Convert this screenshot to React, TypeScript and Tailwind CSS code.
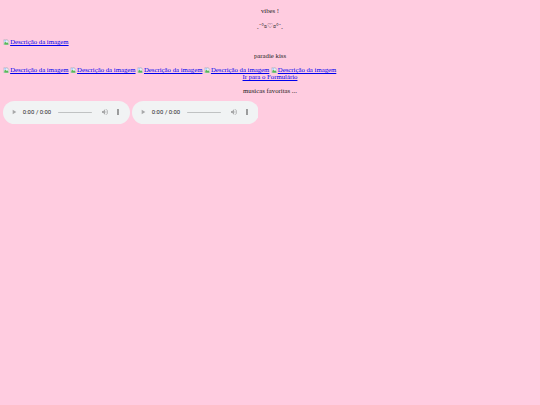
import React from 'react';

// Chrome-style broken image glyph, shown before the alt text
function BrokenImage() {
  return (
    <svg viewBox="0 0 16 16" className="inline-block h-4 w-4 align-[-3px]" aria-hidden="true">
      <path d="M2 1.5h8l3.5 3.5v9.5h-11.5z" fill="#fff" stroke="#9aa0a6" strokeWidth="1" />
      <path d="M10 1.5v3.5h3.5" fill="#e8eaed" stroke="#9aa0a6" strokeWidth="1" />
      <path d="M3 9l2.5-2.5 2.5 2.5 2-1.5 2.5 2.5v3.5h-9.5z" fill="#5bb55b" />
      <rect x="3" y="3" width="5" height="3" fill="#8ab4f8" />
    </svg>
  );
}

function ImgLink() {
  return (
    <a href="#" className="text-[#0000ee] underline">
      <BrokenImage />
      Descrição da imagem
    </a>
  );
}

export default function App() {
  return (
    <div className="flow-root min-h-screen bg-[#ffcce0] text-[#222]">
      <div className="flow-root px-2 [zoom:0.421875] font-['Liberation_Serif','DejaVu_Serif',serif] text-[16px] leading-[normal]">
        <p className="my-4 text-center">vibes !</p>
        <p className="my-4 text-center leading-[26px]">ˏˋ°ʚ♡ɞ°ˊˎ</p>

        <div>
          <ImgLink />
        </div>

        <p className="my-4 text-center">paradie kiss</p>

        <div>
          <ImgLink /> <ImgLink /> <ImgLink /> <ImgLink /> <ImgLink />
        </div>
        <div className="text-center">
          <a href="#" className="text-[#0000ee] underline">
            Ir para o Formulário
          </a>
        </div>

        <p className="my-4 text-center">musicas favoritas ...</p>

        <div>
          <audio controls className="inline-block" /> <audio controls className="inline-block" />
        </div>
      </div>
    </div>
  );
}
